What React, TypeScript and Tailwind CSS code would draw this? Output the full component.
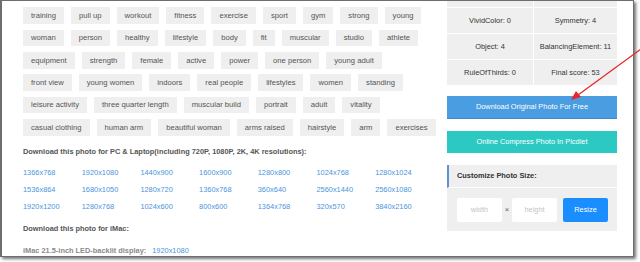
import React from 'react';

const tagRows: string[][] = [
  ['training', 'pull up', 'workout', 'fitness', 'exercise', 'sport', 'gym', 'strong', 'young'],
  ['woman', 'person', 'healthy', 'lifestyle', 'body', 'fit', 'muscular', 'studio', 'athlete'],
  ['equipment', 'strength', 'female', 'active', 'power', 'one person', 'young adult'],
  ['front view', 'young women', 'indoors', 'real people', 'lifestyles', 'women', 'standing'],
  ['leisure activity', 'three quarter length', 'muscular build', 'portrait', 'adult', 'vitality'],
  ['casual clothing', 'human arm', 'beautiful woman', 'arms raised', 'hairstyle', 'arm', 'exercises'],
];

const resolutions = [
  '1366x768', '1920x1080', '1440x900', '1600x900', '1280x800', '1024x768', '1280x1024',
  '1536x864', '1680x1050', '1280x720', '1360x768', '360x640', '2560x1440', '2560x1080',
  '1920x1200', '1280x768', '1024x600', '800x600', '1364x768', '320x570', '3840x2160',
];

// first row sits above the visible area, only its lower edge shows
const scores: [string, string][] = [
  ['', ''],
  ['VividColor: 0', 'Symmetry: 4'],
  ['Object: 4', 'BalancingElement: 11'],
  ['RuleOfThirds: 0', 'Final score: 53'],
];

export default function App() {
  return (
    <div className="relative w-[640px] h-[262px] bg-white overflow-hidden font-['Liberation_Sans',Arial,sans-serif] text-[7.4px]">
      <div className="w-[634px] h-[257px] border border-[#6e6e6e] border-l-2 bg-white shadow-[2px_2px_3px_rgba(0,0,0,0.55)] overflow-hidden flex">
        {/* left column */}
        <div className="w-[424px] pl-[21px]">
          <div className="flex flex-col gap-[5.7px] pt-[6.3px]">
            {tagRows.map((row, i) => (
              <div key={i} className="flex gap-[7px]">
                {row.map((tag) => (
                  <span key={tag} className="h-[16.7px] px-2 flex items-center bg-[#efefef] text-[#555] text-[7.65px] whitespace-nowrap">
                    {tag}
                  </span>
                ))}
              </div>
            ))}
          </div>

          <p className="mt-[11px] h-[10px] leading-[10px] font-bold text-[#555] whitespace-nowrap">
            Download this photo for PC &amp; Laptop(including 720P, 1080P, 2K, 4K resolutions):
          </p>
          <div className="mt-[11px] grid grid-cols-[repeat(7,58.7px)] gap-y-[7px]">
            {resolutions.map((r) => (
              <a key={r} className="h-[10px] leading-[10px] text-[#4a95dc]">{r}</a>
            ))}
          </div>

          <p className="mt-[12px] h-[10px] leading-[10px] font-bold text-[#555]">Download this photo for iMac:</p>
          <p className="mt-[12px] h-[10px] leading-[10px] whitespace-nowrap">
            <span className="font-bold text-[#8a8a8a]">iMac 21.5-inch LED-backlit display:</span>
            <a className="ml-[6px] text-[#4a95dc]">1920x1080</a>
          </p>
        </div>

        {/* right column */}
        <div className="w-[170px] ml-[21px]">
          <div className="-mt-[19px] grid grid-cols-[86px_1fr] gap-px bg-white">
            {scores.map(([a, b], i) => (
              <React.Fragment key={i}>
                <div className="h-[25px] flex items-center justify-center bg-[#efefef] text-[#333]">{a}</div>
                <div className="h-[25px] flex items-center justify-center bg-[#efefef] text-[#333]">{b}</div>
              </React.Fragment>
            ))}
          </div>

          <button className="mt-[11px] w-full h-[23px] bg-[#4a9de0] text-white border-b border-[#3c8acb]">
            Download Original Photo For Free
          </button>
          <button className="mt-[12px] w-full h-[22px] bg-[#2cc9c3] text-white">
            Online Compress Photo In Picdiet
          </button>

          <div className="mt-[12px] bg-[#efefef]">
            <div className="h-[23px] flex items-center pl-[8px] border-l-2 border-[#5f93cf] font-bold text-[#333] border-b border-b-white">
              Customize Photo Size:
            </div>
            <div className="h-[43px] flex items-center pl-[10px]">
              <input placeholder="width" className="w-[45px] h-[24px] bg-white text-center placeholder:text-[#c4c4c4] rounded-[2px] outline-none" />
              <span className="w-[10px] text-center text-[#555]">×</span>
              <input placeholder="height" className="w-[45px] h-[24px] bg-white text-center placeholder:text-[#c4c4c4] rounded-[2px] outline-none" />
              <button className="ml-[6px] w-[45px] h-[24px] bg-[#1a8dff] text-white rounded-[2px]">Resize</button>
            </div>
          </div>
        </div>
      </div>

      {/* annotation arrow */}
      <svg className="absolute left-0 top-0 pointer-events-none" width="640" height="262">
        <line x1="641" y1="49" x2="578" y2="95" stroke="#e5262a" strokeWidth="1.3" />
        <polygon points="571,100 576,91 581,97" fill="#e5262a" />
      </svg>
    </div>
  );
}
